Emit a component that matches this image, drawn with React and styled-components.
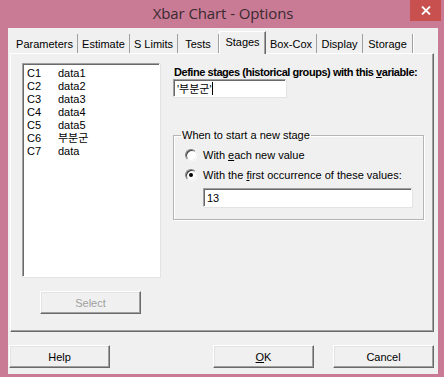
import React from "react";
import styled, { createGlobalStyle } from "styled-components";

const Global = createGlobalStyle`
  html, body { margin: 0; padding: 0; background: #c97b96; }
  * { box-sizing: border-box; }
`;

const Window = styled.div`
  width: 444px;
  height: 377px;
  background: #c97b96;
  display: flex;
  flex-direction: column;
  font-family: "Liberation Sans", Arial, "Noto Sans CJK KR", sans-serif;
  font-size: 11px;
  color: #000;
  overflow: hidden;
`;

const TitleBar = styled.div`
  height: 28px;
  flex: none;
  display: flex;
  align-items: flex-start;
  justify-content: center;
  position: relative;
`;

const Title = styled.div`
  font-family: "Open Sans", "Noto Sans", sans-serif;
  font-size: 15px;
  color: #3a2a30;
  line-height: 26px;
  padding-left: 2px;
  letter-spacing: -0.1px;
`;

const CloseBtn = styled.div`
  position: absolute;
  top: 0;
  right: 3px;
  width: 31px;
  height: 21px;
  background: #c8504e;
  display: flex;
  align-items: center;
  justify-content: center;
`;

const Client = styled.div`
  flex: 1;
  margin: 0 6px 3px 8px;
  background: #f0f0f0;
  padding: 3px 4px 0 1px;
  display: flex;
  flex-direction: column;
`;

const TabStrip = styled.div`
  display: flex;
  align-items: flex-end;
  height: 22px;
  padding-left: 3px;
  position: relative;
  z-index: 1;
`;

const Tab = styled.div`
  width: ${(p) => p.w}px;
  height: 19px;
  display: flex;
  align-items: center;
  justify-content: center;
  white-space: nowrap;
  background: #f0f0f0;
  ${(p) =>
    p.active
      ? `
    border-top: 1px solid #fff;
    border-left: 1px solid #fff;
    border-right: 1px solid #696969;
    box-shadow: inset -1px 0 #a0a0a0;
    margin-bottom: -1px;
    height: 23px;
    padding-bottom: 2px;
  `
      : `
    border-right: 1px solid #a0a0a0;
    box-shadow: 1px 0 #fff;
  `}
`;

const Panel = styled.div`
  margin-left: 1px;
  height: 279px;
  border-top: 1px solid #fff;
  border-left: 1px solid #fff;
  border-right: 1px solid #696969;
  border-bottom: 1px solid #696969;
  box-shadow: inset -1px -1px #a0a0a0;
  display: flex;
  padding: 9px 0 0 11px;
`;

const LeftCol = styled.div`
  width: 138px;
  display: flex;
  flex-direction: column;
`;

const ListBox = styled.div`
  height: 214px;
  background: #fff;
  border-top: 1px solid #a0a0a0;
  border-left: 1px solid #a0a0a0;
  border-right: 1px solid #fff;
  border-bottom: 1px solid #fff;
  box-shadow: inset 1px 1px #696969, 1px 1px #e3e3e3;
  padding: 3px 0 0 4px;
`;

const ListRow = styled.div`
  display: flex;
  height: 13px;
  line-height: 13px;
`;

const ColId = styled.span`
  width: 31px;
`;

const Button = styled.div`
  width: 101px;
  height: 23px;
  display: flex;
  align-items: center;
  justify-content: center;
  background: #f0f0f0;
  border-top: 1px solid #fff;
  border-left: 1px solid #fff;
  border-right: 1px solid #696969;
  border-bottom: 1px solid #696969;
  box-shadow: inset -1px -1px #a0a0a0, inset 1px 1px #e3e3e3;
  color: ${(p) => (p.disabled ? "#a0a0a0" : "#000")};
`;

const SelectWrap = styled.div`
  margin: 14px 0 0 18px;
`;

const RightCol = styled.div`
  margin-left: 13px;
  padding-top: 3px;
  display: flex;
  flex-direction: column;
`;

const Label = styled.div`
  font-weight: bold;
  line-height: 13px;
  letter-spacing: -0.45px;
  padding-left: 1px;
`;

const TextBox = styled.div`
  width: ${(p) => p.w}px;
  height: ${(p) => p.h}px;
  background: #fff;
  border-top: 1px solid #a0a0a0;
  border-left: 1px solid #a0a0a0;
  border-right: 1px solid #fff;
  border-bottom: 1px solid #fff;
  box-shadow: inset 1px 1px #696969, 1px 1px #e3e3e3;
  display: flex;
  align-items: center;
  padding-left: 3px;
  margin-left: ${(p) => p.ml || 0}px;
  margin-top: ${(p) => p.mt || 0}px;
`;

const Caret = styled.span`
  display: inline-block;
  width: 1px;
  height: 13px;
  background: #000;
`;

const Group = styled.fieldset`
  margin: 32px 0 0 0;
  width: 251px;
  height: 91px;
  border: 1px solid #b5b5b5;
  box-shadow: inset 1px 1px #fff, 1px 1px #fff;
  padding: 3px 0 0 11px;
  min-width: 0;
`;

const Legend = styled.legend`
  padding: 0 1px;
  margin-left: -4px;
  line-height: 13px;
`;

const RadioRow = styled.label`
  display: flex;
  align-items: center;
  height: 20px;
  gap: 6px;
`;

const Radio = styled.span`
  width: 12px;
  height: 12px;
  border-radius: 50%;
  background: #fff;
  border: 1px solid;
  border-color: #808080 #f0f0f0 #f0f0f0 #808080;
  box-shadow: inset 1px 1px #404040, 0.5px 0.5px #fff;
  display: flex;
  align-items: center;
  justify-content: center;

  &::after {
    content: "";
    width: 4px;
    height: 4px;
    border-radius: 50%;
    background: ${(p) => (p.checked ? "#000" : "transparent")};
  }
`;

const Footer = styled.div`
  display: flex;
  padding: 13px 0 0 0;
  gap: 19px;
`;

const Spacer = styled.div`
  flex: 1;
`;

const tabs = [
  ["Parameters", 66],
  ["Estimate", 52],
  ["S Limits", 48],
  ["Tests", 41],
  ["Stages", 47, true],
  ["Box-Cox", 51],
  ["Display", 46],
  ["Storage", 50],
];

const columns = [
  ["C1", "data1"],
  ["C2", "data2"],
  ["C3", "data3"],
  ["C4", "data4"],
  ["C5", "data5"],
  ["C6", "부분군"],
  ["C7", "data"],
];

export default function App() {
  return (
    <>
      <Global />
      <Window>
        <TitleBar>
          <Title>Xbar Chart - Options</Title>
          <CloseBtn>
            <svg width="10" height="9" viewBox="0 0 10 9">
              <path d="M1 0.5 L9 8.5 M9 0.5 L1 8.5" stroke="#fff" strokeWidth="1.8" />
            </svg>
          </CloseBtn>
        </TitleBar>
        <Client>
          <TabStrip>
            {tabs.map(([t, w, active]) => (
              <Tab key={t} w={w} active={active}>
                {t}
              </Tab>
            ))}
          </TabStrip>
          <Panel>
            <LeftCol>
              <ListBox>
                {columns.map(([c, n]) => (
                  <ListRow key={c}>
                    <ColId>{c}</ColId>
                    <span>{n}</span>
                  </ListRow>
                ))}
              </ListBox>
              <SelectWrap>
                <Button disabled>Select</Button>
              </SelectWrap>
            </LeftCol>
            <RightCol>
              <Label>
                Define stages (historical groups) with this <u>v</u>ariable:
              </Label>
              <TextBox w={113} h={18}>
                '부분군'<Caret />
              </TextBox>
              <Group>
                <Legend>When to start a new stage</Legend>
                <RadioRow>
                  <Radio />
                  <span>
                    With <u>e</u>ach new value
                  </span>
                </RadioRow>
                <RadioRow>
                  <Radio checked />
                  <span>
                    With the <u>f</u>irst occurrence of these values:
                  </span>
                </RadioRow>
                <TextBox w={209} h={19} ml={18} mt={3}>
                  13
                </TextBox>
              </Group>
            </RightCol>
          </Panel>
          <Footer>
            <Button>Help</Button>
            <Spacer />
            <Button>
              <u>O</u>K
            </Button>
            <Button>Cancel</Button>
          </Footer>
        </Client>
      </Window>
    </>
  );
}
